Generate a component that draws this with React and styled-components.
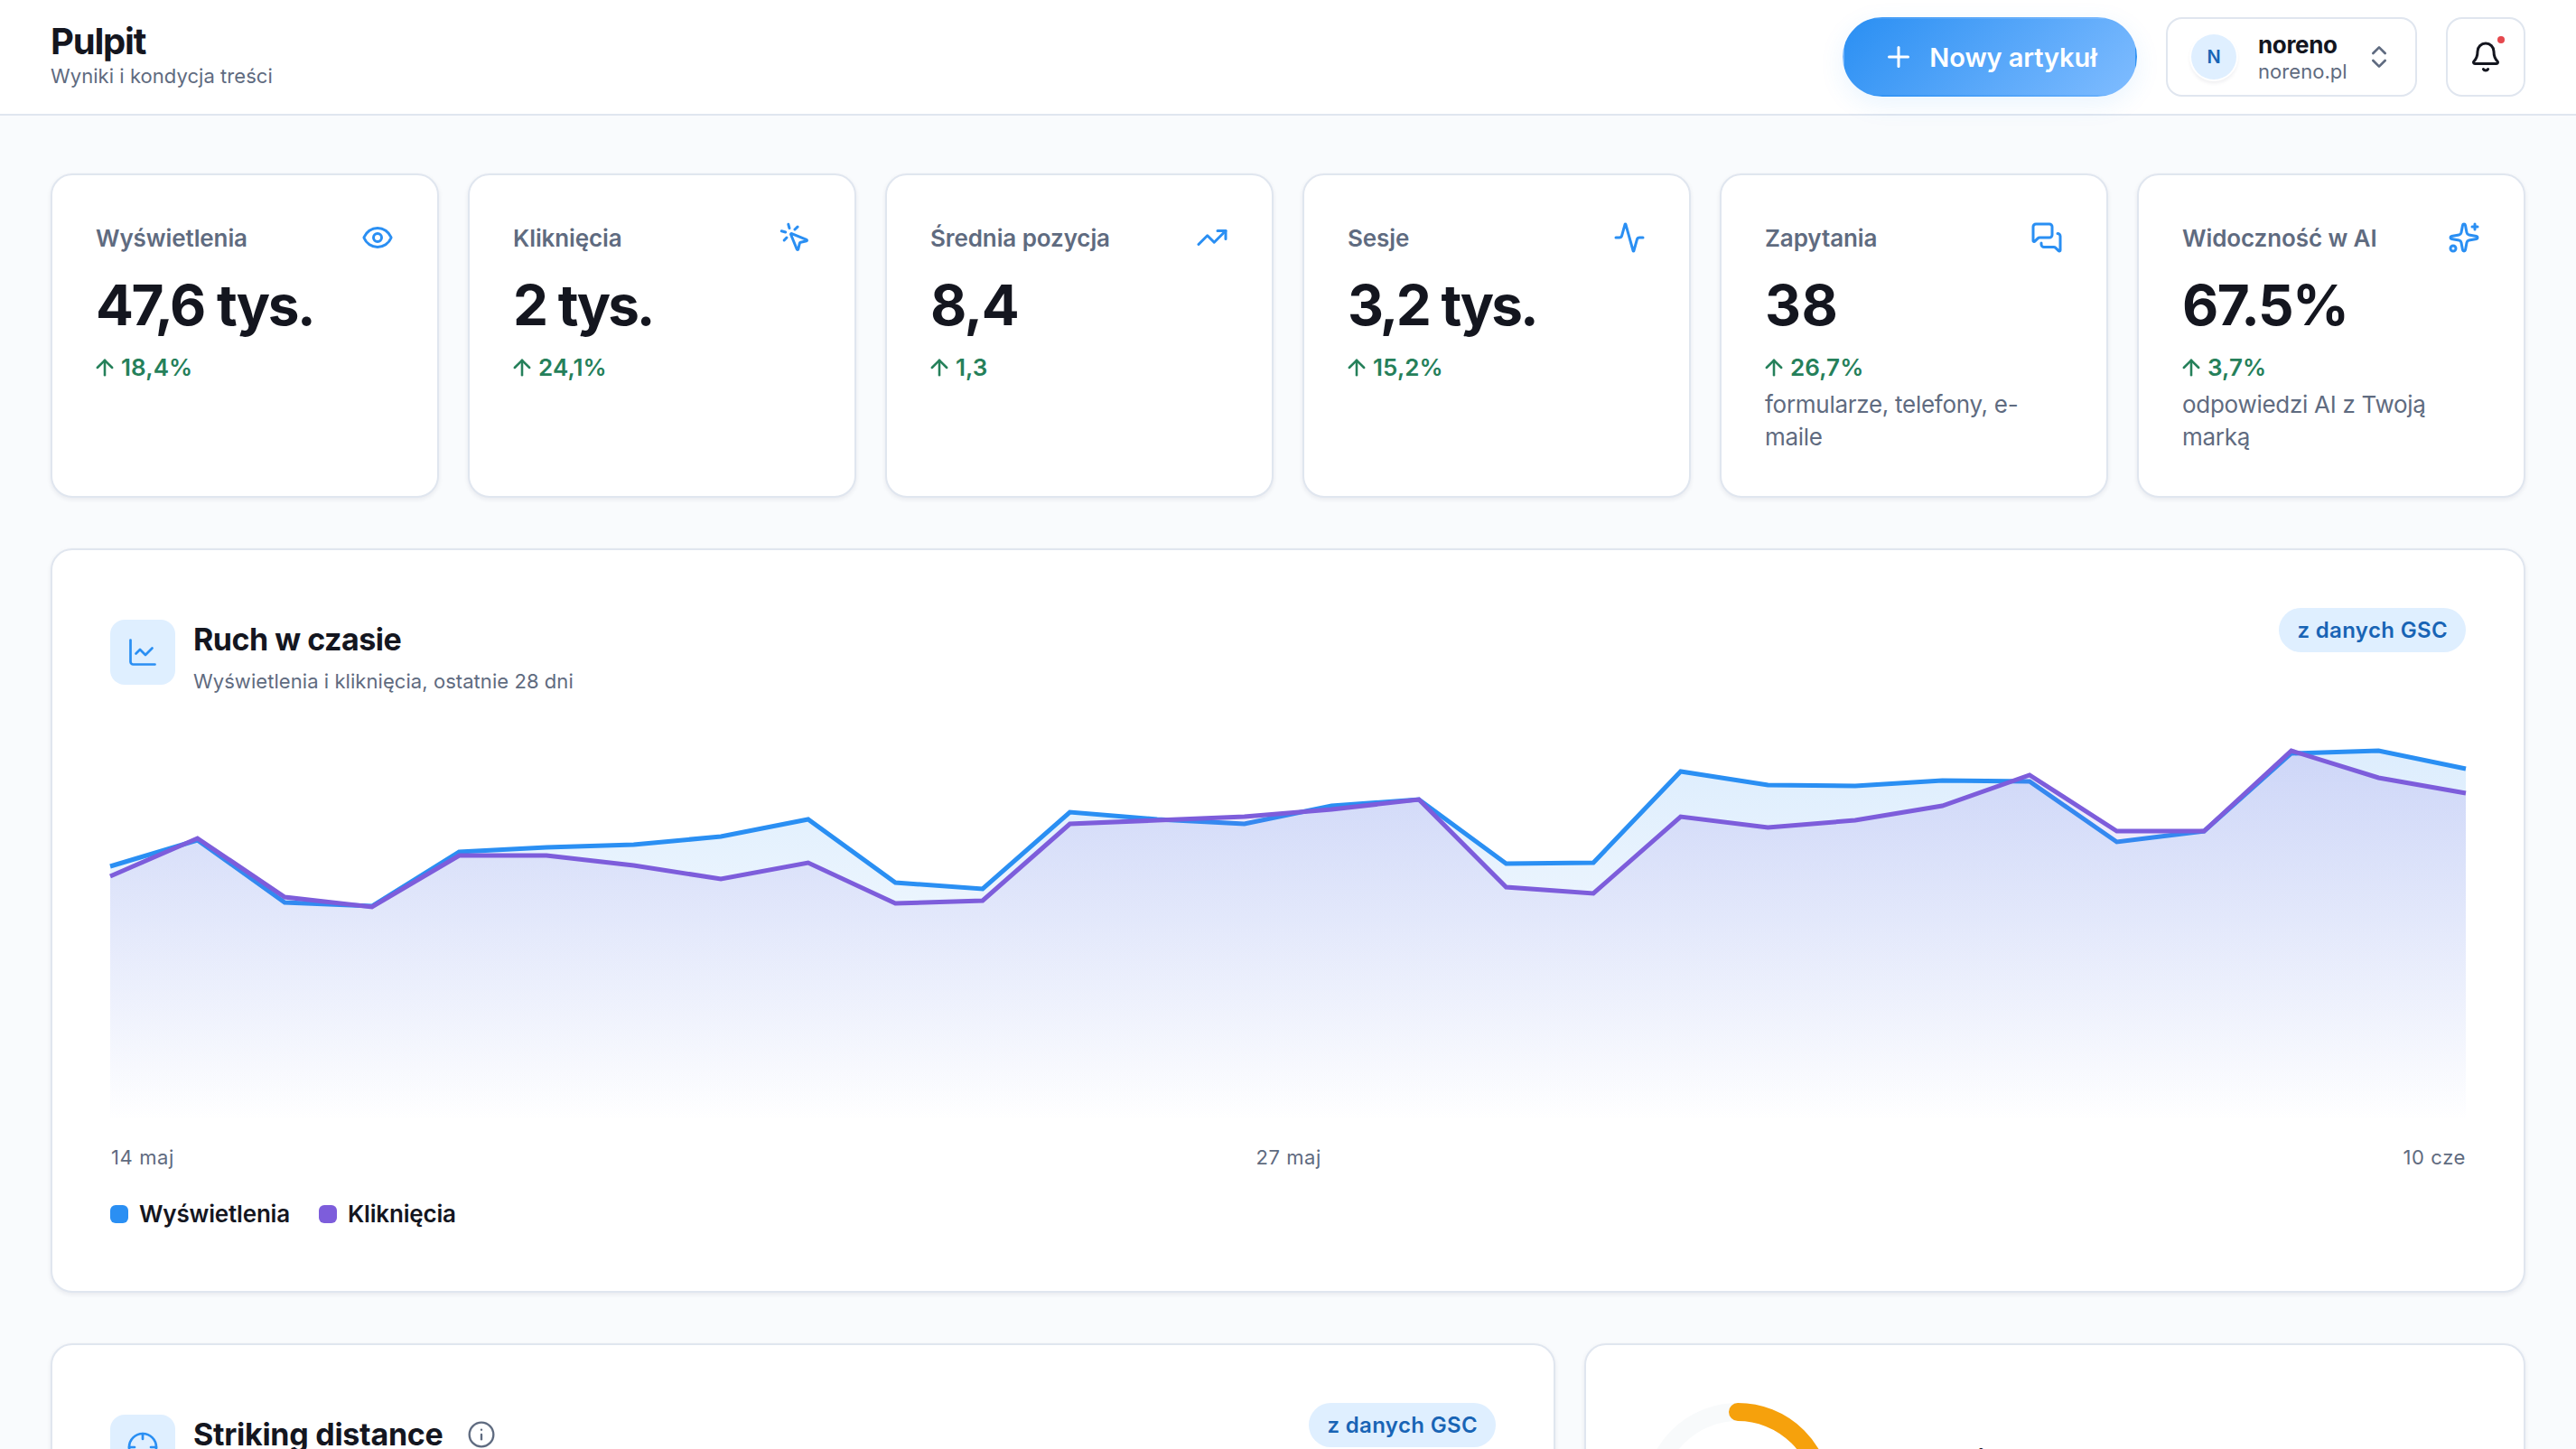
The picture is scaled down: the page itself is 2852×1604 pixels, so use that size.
import React from "react";
import styled, { createGlobalStyle } from "styled-components";
import {
  Activity, Bell, ChartLine, ChevronsUpDown, Crosshair, Eye, Info,
  MessagesSquare, MousePointerClick, Plus, Sparkles, TrendingUp, ArrowUp,
} from "lucide-react";

const c = {
  ink: "#14161f", muted: "#5f6b80", line: "#e0e6ef", page: "#f9fbfd",
  blue: "#2a8ff3", violet: "#7d5ddb", green: "#25805a", soft: "#dfefff", link: "#1864b5",
};

const Global = createGlobalStyle`
  * { box-sizing: border-box; }
  body { margin: 0; background: ${c.page}; color: ${c.ink};
    font-family: Inter, "Noto Sans", sans-serif; overflow: hidden; }
`;
const Page = styled.div`height: 1604px; overflow: hidden; display: flex; flex-direction: column;`;
const Header = styled.header`
  height: 128px; flex: none; background: #fff; border-bottom: 2px solid ${c.line};
  display: flex; align-items: center; justify-content: space-between; padding: 0 56px;
`;
const Heading = styled.h1`margin: 0; font-size: 40px; line-height: 48px; font-weight: 700; letter-spacing: -1.2px;`;
const Tagline = styled.div`font-size: 22px; line-height: 28px; color: ${c.muted}; letter-spacing: 0.05px;`;
const Brand = styled.div`display: flex; flex-direction: column; padding-bottom: 6px;`;
const Actions = styled.div`display: flex; gap: 32px; align-items: center;`;
const NewButton = styled.button`
  width: 326px; height: 88px; border: 2px solid transparent; border-radius: 44px; color: #fff;
  background: linear-gradient(135deg, #2a8ff3, #7fbcff);
  box-shadow: 0 8px 28px rgba(42, 143, 243, 0.1);
  display: flex; align-items: center; justify-content: center; gap: 16px;
  font: 600 29px/1 Inter, sans-serif; letter-spacing: -0.1px;
`;
const Outlined = styled.div`
  height: 88px; border: 2px solid ${c.line}; border-radius: 18px; background: #fff;
  display: flex; align-items: center;
`;
const Account = styled(Outlined)`width: 278px; padding: 0 24px 0 26px;`;
const Avatar = styled.div`
  width: 50px; height: 50px; border-radius: 50%; background: ${c.soft}; color: ${c.link};
  font-size: 20px; font-weight: 600; display: grid; place-items: center; flex: none;
  box-shadow: 0 0 0 2px #fff, 0 3px 4px 1px rgba(20, 30, 60, 0.08);
`;
const AccountText = styled.div`display: flex; flex-direction: column; width: 118px; flex: none; padding: 1px 0 0 24px;`;
const AccountName = styled.div`font-size: 26px; line-height: 30px; font-weight: 700; letter-spacing: -0.35px;`;
const AccountSite = styled.div`font-size: 22px; line-height: 28px; color: ${c.muted}; letter-spacing: 0.05px;`;
const Switcher = styled(ChevronsUpDown)`margin-left: auto; flex: none; color: ${c.muted};`;
const BellBox = styled(Outlined)`width: 88px; justify-content: center; position: relative;`;
const Dot = styled.i`
  position: absolute; top: 19px; right: 21px; width: 8px; height: 8px; border-radius: 50%; background: #e5484d;
`;
const Main = styled.main`padding: 64px 56px 0; display: flex; flex-direction: column; gap: 56px;`;
const Stats = styled.section`display: grid; grid-template-columns: repeat(6, 1fr); gap: 32px;`;
const Card = styled.section`
  background: #fff; border: 2px solid ${c.line}; border-radius: 24px;
  box-shadow: 0 2px 5px rgba(20, 30, 60, 0.08);
`;
const Stat = styled(Card)`height: 359px; padding: 48px 48px 0;`;
const StatTop = styled.div`
  display: flex; justify-content: space-between; align-items: center; height: 42px;
  font-size: 26px; font-weight: 600; color: ${c.muted}; letter-spacing: -0.1px;
  svg { color: ${c.blue}; }
`;
const StatValue = styled.div`
  font-size: 62px; font-weight: 700; letter-spacing: ${(p) => p.$track}px; word-spacing: 2px;
  line-height: 76px; margin-top: 16px; white-space: nowrap;
`;
const StatDelta = styled.div`
  display: flex; align-items: center; gap: 4px; color: ${c.green};
  font-size: 26px; line-height: 36px; font-weight: 600; margin-top: 13px; letter-spacing: 0.1px;
  svg { margin-left: -4px; }
`;
const StatNote = styled.div`font-size: 26px; line-height: 36px; color: ${c.muted}; margin-top: 5px; letter-spacing: -0.28px;`;
const Panel = styled(Card)`padding: 64px 64px 0; height: ${(p) => p.$h}px;`;
const PanelTop = styled.div`display: flex; justify-content: space-between; align-items: flex-start;`;
const PanelHead = styled.div`display: flex; align-items: flex-start; gap: 20px; padding-top: 13px;`;
const Tile = styled.div`
  width: 72px; height: 72px; border-radius: 16px; background: ${c.soft}; color: ${c.blue};
  display: grid; place-items: center;
`;
const PanelTitle = styled.h2`
  margin: 0; font-size: 34px; line-height: 44px; font-weight: 700; letter-spacing: ${(p) => p.$track}px;
  display: flex; align-items: center; gap: 26px;
  svg { color: ${c.muted}; }
`;
const PanelSub = styled.div`font-size: 22px; line-height: 32px; color: ${c.muted}; margin-top: 8px; letter-spacing: 0.06px;`;
const Badge = styled.span`
  height: 49px; border-radius: 25px; background: ${c.soft}; color: ${c.link}; letter-spacing: 0.35px;
  padding: 0 20px; display: flex; align-items: center; font-size: 24px; font-weight: 600; white-space: nowrap;
`;
const Chart = styled.svg`display: block; width: 100%; height: 440px; margin-top: 32px; overflow: visible;`;
const Axis = styled.div`
  display: flex; justify-content: space-between; padding-left: 1px;
  font-size: 22px; line-height: 30px; letter-spacing: 0.6px; color: ${c.muted}; margin-top: 24px;
`;
const Legend = styled.div`display: flex; gap: 32px; margin-top: 30px; font-size: 26px; line-height: 36px; font-weight: 600; letter-spacing: -0.18px;`;
const Key = styled.span`
  display: flex; align-items: center; gap: 12px;
  &::before { content: ""; width: 20px; height: 20px; border-radius: 6px; background: ${(p) => p.$c}; }
`;
const Lower = styled.div`display: grid; grid-template-columns: 1666px 1fr; gap: 32px;`;
const Score = styled(Card)`height: 700px; padding: 64px; display: flex; align-items: flex-start; gap: 36px;`;
const ScoreTitle = styled.h2`margin: 42px 0 0; font-size: 35px; line-height: 44px; font-weight: 700; letter-spacing: -1px; white-space: nowrap;`;

const stats = [
  { label: "Wyświetlenia", value: "47,6 tys.", track: -2.4, delta: "18,4%", icon: Eye },
  { label: "Kliknięcia", value: "2 tys.", track: -3, delta: "24,1%", icon: MousePointerClick },
  { label: "Średnia pozycja", value: "8,4", track: -1.5, delta: "1,3", icon: TrendingUp },
  { label: "Sesje", value: "3,2 tys.", track: -2.9, delta: "15,2%", icon: Activity },
  { label: "Zapytania", value: "38", track: 0.5, delta: "26,7%", icon: MessagesSquare, note: "formularze, telefony, e-maile" },
  { label: "Widoczność w AI", value: "67.5%", track: -1.6, delta: "3,7%", icon: Sparkles, note: "odpowiedzi AI z Twoją marką" },
];

const views = [959, 930, 999, 1003, 943, 938, 935, 926, 907, 977, 984, 899, 907, 912, 892, 885, 956, 955, 854, 869, 870, 864, 865, 932, 920, 834, 831, 851];
const clicks = [970, 928, 993, 1004, 947, 947, 958, 973, 955, 1000, 997, 912, 908, 904, 896, 885, 982, 989, 904, 916, 908, 892, 858, 920, 920, 831, 861, 878];
const TOP = 802;
const line = (d) => d.map((y, i) => `${((i * 2608) / 27).toFixed(1)},${y - TOP}`).join(" ");
const area = (d) => `0,440 ${line(d)} 2608,440`;

function TrafficChart() {
  return (
    <Chart viewBox="0 0 2608 440" preserveAspectRatio="none">
      <defs>
        <linearGradient id="gv" x1="0" x2="0" y1="0" y2="1">
          <stop offset="0" stopColor={c.blue} stopOpacity="0.16" />
          <stop offset="1" stopColor={c.blue} stopOpacity="0" />
        </linearGradient>
        <linearGradient id="gc" x1="0" x2="0" y1="0" y2="1">
          <stop offset="0" stopColor={c.violet} stopOpacity="0.16" />
          <stop offset="1" stopColor={c.violet} stopOpacity="0" />
        </linearGradient>
      </defs>
      <polygon points={area(views)} fill="url(#gv)" />
      <polyline points={line(views)} fill="none" stroke={c.blue} strokeWidth="5" />
      <polygon points={area(clicks)} fill="url(#gc)" />
      <polyline points={line(clicks)} fill="none" stroke={c.violet} strokeWidth="5" />
    </Chart>
  );
}

export default function App() {
  return (
    <Page>
      <Global />
      <Header>
        <Brand>
          <Heading>Pulpit</Heading>
          <Tagline>Wyniki i kondycja treści</Tagline>
        </Brand>
        <Actions>
          <NewButton><Plus size={36} />Nowy artykuł</NewButton>
          <Account>
            <Avatar>N</Avatar>
            <AccountText>
              <AccountName>noreno</AccountName>
              <AccountSite>noreno.pl</AccountSite>
            </AccountText>
            <Switcher size={32} />
          </Account>
          <BellBox><Bell size={36} /><Dot /></BellBox>
        </Actions>
      </Header>
      <Main>
        <Stats>
          {stats.map(({ label, value, track, delta, icon: Icon, note }) => (
            <Stat key={label}>
              <StatTop>{label}<Icon size={36} /></StatTop>
              <StatValue $track={track}>{value}</StatValue>
              <StatDelta><ArrowUp size={28} strokeWidth={2.2} />{delta}</StatDelta>
              {note && <StatNote>{note}</StatNote>}
            </Stat>
          ))}
        </Stats>
        <Panel $h={824}>
          <PanelTop>
            <PanelHead>
              <Tile><ChartLine size={36} strokeWidth={1.8} /></Tile>
              <div>
                <PanelTitle $track={-0.5}>Ruch w czasie</PanelTitle>
                <PanelSub>Wyświetlenia i kliknięcia, ostatnie 28 dni</PanelSub>
              </div>
            </PanelHead>
            <Badge>z danych GSC</Badge>
          </PanelTop>
          <TrafficChart />
          <Axis><span>14 maj</span><span>27 maj</span><span>10 cze</span></Axis>
          <Legend>
            <Key $c={c.blue}>Wyświetlenia</Key>
            <Key $c={c.violet}>Kliknięcia</Key>
          </Legend>
        </Panel>
        <Lower>
          <Panel $h={700}>
            <PanelTop>
              <PanelHead>
                <Tile><Crosshair size={36} strokeWidth={1.8} /></Tile>
                <PanelTitle $track={-0.27}>Striking distance<Info size={32} strokeWidth={1.75} /></PanelTitle>
              </PanelHead>
              <Badge>z danych GSC</Badge>
            </PanelTop>
          </Panel>
          <Score>
            <svg width="208" height="208" viewBox="0 0 208 208" fill="none" strokeWidth="20">
              <circle cx="104" cy="104" r="94" stroke="#f8fafb" />
              <circle cx="104" cy="104" r="94" stroke="#f6a10c" strokeLinecap="round" strokeDasharray="400 1000" transform="rotate(-90 104 104)" />
            </svg>
            <ScoreTitle>Kondycja SEO</ScoreTitle>
          </Score>
        </Lower>
      </Main>
    </Page>
  );
}
